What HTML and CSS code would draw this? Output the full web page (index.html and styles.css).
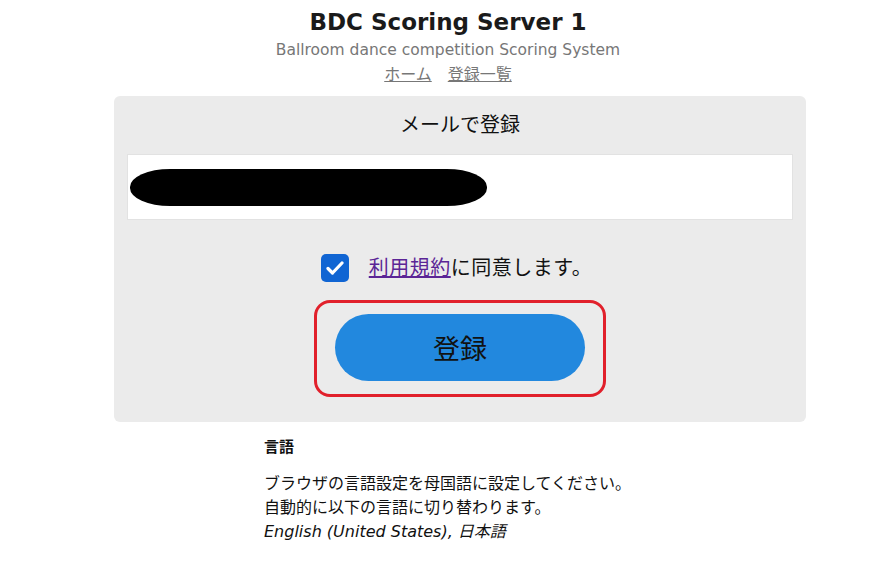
FILE: index.html
```html
<!DOCTYPE html>
<html lang="ja">
<head>
<meta charset="utf-8">
<title>BDC Scoring Server 1</title>
<link rel="stylesheet" href="styles.css">
</head>
<body>
<header class="header">
  <h1 class="title">BDC Scoring Server 1</h1>
  <p class="subtitle">Ballroom dance competition Scoring System</p>
  <nav class="nav"><a href="#">ホーム</a><a href="#">登録一覧</a></nav>
</header>
<main class="card">
  <h2 class="card-title">メールで登録</h2>
  <div class="input"><span class="redact"></span></div>
  <label class="agree">
    <span class="check"><svg width="18" height="14" viewBox="0 0 18 14"><path d="M2 7.5 L6.5 12 L16 2" fill="none" stroke="#fff" stroke-width="3.2" stroke-linecap="round" stroke-linejoin="round"/></svg></span>
    <span class="agree-text"><a href="#">利用規約</a>に同意します。</span>
  </label>
  <div class="btn-wrap">
    <button class="btn">登録</button>
  </div>
</main>
<section class="lang">
  <h3 class="lang-title">言語</h3>
  <p class="lang-text">ブラウザの言語設定を母国語に設定してください。<br>自動的に以下の言語に切り替わります。<br><em>English (United States), 日本語</em></p>
</section>
</body>
</html>
```
FILE: styles.css
```css
* { box-sizing: border-box; }
body {
  margin: 0;
  font-family: "DejaVu Sans", "Noto Sans CJK JP", sans-serif;
  color: #111;
  background: #fff;
}
.header { text-align: center; padding-top: 6px; }
.title {
  margin: 0;
  font-size: 23px;
  font-weight: bold;
  line-height: 32px;
  color: #1a1a1a;
}
.subtitle {
  margin: 2px 0 0;
  font-size: 15.5px;
  line-height: 20px;
  color: #777;
}
.nav {
  display: flex;
  justify-content: center;
  gap: 16px;
  margin-top: 4px;
  font-size: 16px;
  line-height: 21px;
}
.nav a { color: #777; text-decoration: underline; }
.card {
  width: 692px;
  margin: 11px 0 0 114px;
  background: #ebebeb;
  border-radius: 6px;
  padding: 15px 13px 25px;
}
.card-title {
  margin: 0;
  text-align: center;
  font-weight: normal;
  font-size: 20px;
  line-height: 28px;
}
.input {
  margin-top: 15px;
  height: 66px;
  background: #fff;
  border: 1px solid #e2e2e2;
  display: flex;
  align-items: center;
  padding-left: 2px;
}
.redact {
  display: block;
  width: 357px;
  height: 37px;
  background: #000;
  border-radius: 40px / 18px;
}
.agree {
  display: flex;
  justify-content: center;
  align-items: center;
  gap: 20px;
  margin-top: 34px;
  margin-left: -7px;
  font-size: 20px;
  line-height: 28px;
}
.check {
  width: 28px;
  height: 28px;
  border-radius: 5px;
  background: #1065d3;
  display: flex;
  align-items: center;
  justify-content: center;
}
.agree-text { letter-spacing: 0.5px; }
.agree-text a { color: #5b2596; text-decoration: underline; }
.btn-wrap {
  width: 292px;
  height: 97px;
  margin: 18px auto 0;
  border: 3px solid #e1202b;
  border-radius: 16px;
  display: flex;
  align-items: center;
  justify-content: center;
}
.btn {
  width: 250px;
  height: 67px;
  border: none;
  border-radius: 34px;
  background: #2288de;
  font-family: "DejaVu Sans", "Noto Sans CJK JP", sans-serif;
  font-size: 27px;
  color: #111;
  margin-top: -2px;
}
.lang { margin-left: 264px; padding-top: 14px; }
.lang-title {
  margin: 0;
  font-size: 15px;
  font-weight: bold;
  line-height: 22px;
}
.lang-text {
  margin: 14px 0 0;
  font-size: 16px;
  line-height: 24px;
}
.lang-text em { font-style: italic; }
```
